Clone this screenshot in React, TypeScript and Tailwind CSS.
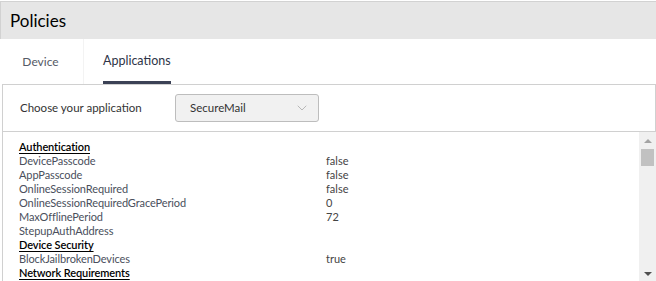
import { ChevronDown } from "lucide-react";

type Row = { label: string; value?: string; heading?: boolean };

const rows: Row[] = [
    { label: "Authentication", heading: true },
    { label: "DevicePasscode", value: "false" },
    { label: "AppPasscode", value: "false" },
    { label: "OnlineSessionRequired", value: "false" },
    { label: "OnlineSessionRequiredGracePeriod", value: "0" },
    { label: "MaxOfflinePeriod", value: "72" },
    { label: "StepupAuthAddress" },
    { label: "Device Security", heading: true },
    { label: "BlockJailbrokenDevices", value: "true" },
    { label: "Network Requirements", heading: true },
];

function App() {
    return (
        <section className="w-[656px] h-[281px] overflow-hidden bg-white font-['Lato',sans-serif] pt-px">
            <div className="h-[38px] bg-[#e6e6e6] border-t border-l border-[#d2d2d2] flex items-center pl-[9px]">
                <h5 className="text-[17px] text-black leading-none">Policies</h5>
            </div>
            <div className="flex h-[45px] items-stretch">
                <div className="w-[84px] flex items-center justify-center border-r border-[#f3f3f3] text-[12px] text-[#555a66] pr-[2px]">
                    Device
                </div>
                <div className="px-[19px] flex items-center relative text-[12.5px] text-[#2e3447]">
                    Applications
                    <span className="absolute left-[19px] right-[19px] bottom-0 h-[3px] bg-[#3b4155]" />
                </div>
            </div>
            <div className="ml-[2px] h-[48px] border border-[#d0d0d0] flex items-center">
                <p className="pl-[17px] w-[172px] text-[11.5px] text-[#333]">Choose your application</p>
                <div className="w-[144px] h-[28px] rounded-[3px] border border-[#bdbdbd] bg-[#f1f1f1] flex items-center justify-between pl-[14px] pr-[8px]">
                    <span className="text-[11.5px] text-[#333]">SecureMail</span>
                    <ChevronDown size={16} strokeWidth={1} className="text-[#9a9a9a]" />
                </div>
            </div>
            <div className="ml-[2px] border-l border-[#d0d0d0] flex h-[150px]">
                <div className="flex-1 pl-[16px] pt-[8px]">
                    {rows.map((r) => (
                        <div key={r.label} className="flex h-[14px] items-center text-[11px] leading-[14px]">
                            <span
                                className={
                                    r.heading
                                        ? "w-[307px] text-black underline underline-offset-2 font-semibold tracking-[-0.1px]"
                                        : "w-[307px] text-[#4a4f5c] tracking-[-0.1px]"
                                }
                            >
                                {r.label}
                            </span>
                            {r.value && <span className="text-[#444]">{r.value}</span>}
                        </div>
                    ))}
                </div>
                <div className="w-[17px] bg-[#f0f0f0] flex flex-col items-center">
                    <div className="h-[17px] flex items-center justify-center">
                        <span className="w-0 h-0 border-l-[4px] border-r-[4px] border-b-[4px] border-l-transparent border-r-transparent border-b-[#a3a3a3]" />
                    </div>
                    <div className="w-[13px] h-[17px] bg-[#c1c1c1]" />
                    <div className="flex-1" />
                    <div className="h-[17px] flex items-center justify-center">
                        <span className="w-0 h-0 border-l-[4px] border-r-[4px] border-t-[4px] border-l-transparent border-r-transparent border-t-[#505050]" />
                    </div>
                </div>
            </div>
        </section>
    );
}

export default App;
